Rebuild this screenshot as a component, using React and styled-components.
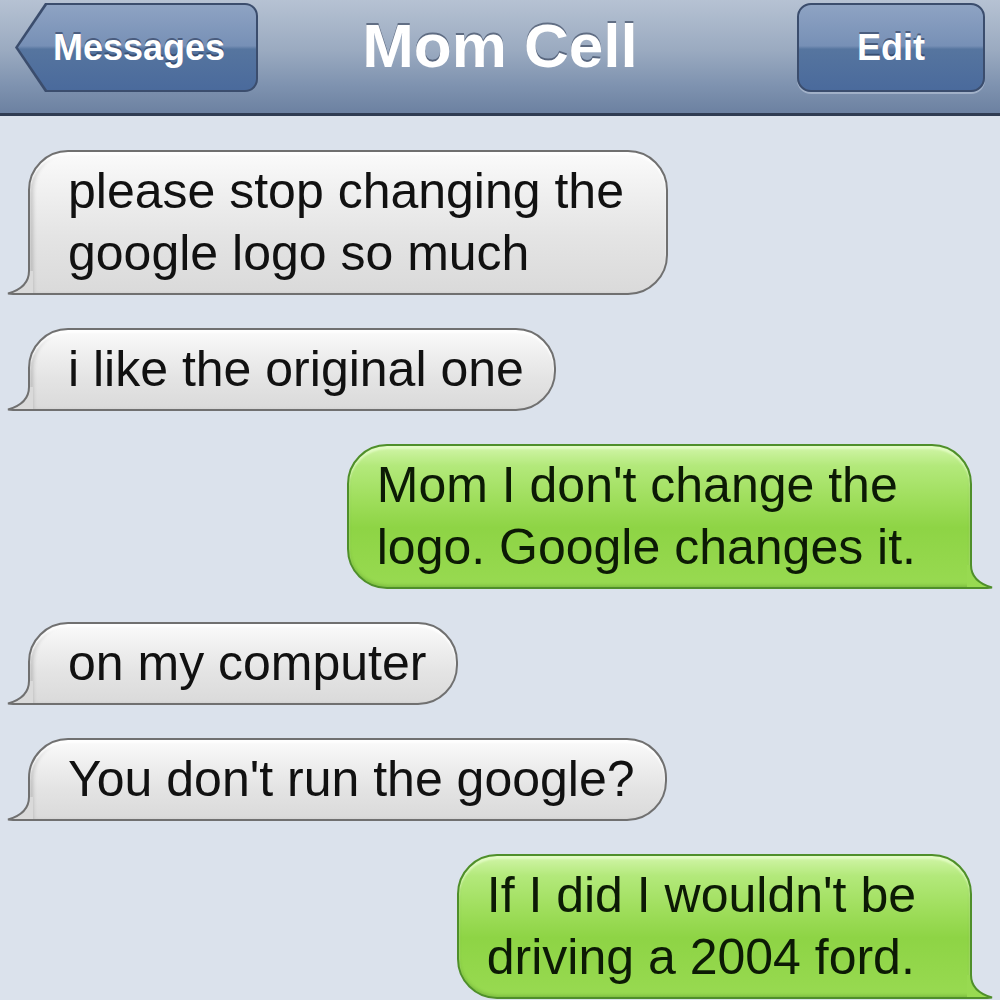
import styled, { createGlobalStyle } from "styled-components";

const GlobalStyle = createGlobalStyle`
  html, body {
    margin: 0;
    padding: 0;
    background: #dbe2ec;
  }
  * {
    box-sizing: border-box;
  }
`;

const messages = [
  { from: "them", lines: ["please stop changing the", "google logo so much"], min: 640 },
  { from: "them", lines: ["i like the original one"] },
  { from: "me", lines: ["Mom I don't change the", "logo. Google changes it."] },
  { from: "them", lines: ["on my computer"] },
  { from: "them", lines: ["You don't run the google?"] },
  { from: "me", lines: ["If I did I wouldn't be", "driving a 2004 ford."] },
];

function Tail({ me }) {
  const fill = me ? "#98da51" : "#dadada";
  const stroke = me ? "#4f8f2a" : "#707070";
  return (
    <TailSvg $me={me} width="30" height="24" viewBox="0 0 30 24">
      <path d="M23 0 C23 10 18 18 2 22.5 C8 23.5 16 23 27 23 L27 0 Z" fill={fill} />
      <path
        d="M23 0 C23 10 18 18 2 22.5 C8 23.5 16 23 30 23"
        fill="none"
        stroke={stroke}
        strokeWidth="2"
      />
    </TailSvg>
  );
}

export default function App() {
  return (
    <Screen>
      <GlobalStyle />
      <Header>
        <BackButton>
          <BackInner>Messages</BackInner>
        </BackButton>
        <Title>Mom Cell</Title>
        <EditButton>Edit</EditButton>
      </Header>
      <Thread>
        {messages.map((m, i) => (
          <Row key={i} $me={m.from === "me"}>
            <Bubble $me={m.from === "me"} $min={m.min}>
              {m.lines.map((l, j) => (
                <Line key={j}>{l}</Line>
              ))}
              <Tail me={m.from === "me"} />
            </Bubble>
          </Row>
        ))}
      </Thread>
    </Screen>
  );
}

const Screen = styled.div`
  width: 1000px;
  height: 1000px;
  overflow: hidden;
  display: flex;
  flex-direction: column;
  background: #dbe2ec;
  font-family: "Liberation Sans", Arial, Helvetica, sans-serif;
`;

const Header = styled.div`
  height: 116px;
  padding: 3px 15px 21px;
  display: grid;
  grid-template-columns: 1fr auto 1fr;
  align-items: center;
  background: linear-gradient(180deg, #b6c2d3 0%, #9aaac0 45%, #7f93b0 75%, #6c81a1 100%);
  border-bottom: 3px solid #2f3c52;
`;

const BackButton = styled.div`
  justify-self: start;
  width: 243px;
  height: 89px;
  padding: 2px 2px 2px 3px;
  background: #3b4d6d;
  border-radius: 0 13px 13px 0;
  clip-path: polygon(30px 0, 100% 0, 100% 100%, 30px 100%, 0 50%);
`;

const BackInner = styled.div`
  height: 100%;
  display: flex;
  align-items: center;
  padding-left: 35px;
  border-radius: 0 11px 11px 0;
  clip-path: polygon(29px 0, 100% 0, 100% 100%, 29px 100%, 0 50%);
  background: linear-gradient(180deg, #8ea3c3 0%, #7790b6 48%, #56759f 52%, #4a6a9c 100%);
  color: #fff;
  font-weight: bold;
  font-size: 36px;
  text-shadow: 0 -2px 0 rgba(30, 45, 75, 0.55);
`;

const Title = styled.div`
  color: #fff;
  font-weight: bold;
  font-size: 62px;
  line-height: 1;
  margin-top: -4px;
  text-shadow: 0 -2px 0 rgba(50, 62, 85, 0.6);
`;

const EditButton = styled.div`
  justify-self: end;
  width: 188px;
  height: 89px;
  display: flex;
  align-items: center;
  justify-content: center;
  border: 2px solid #3b4d6d;
  border-radius: 14px;
  background: linear-gradient(180deg, #8ea3c3 0%, #7790b6 48%, #56759f 52%, #4a6a9c 100%);
  box-shadow: 0 2px 0 rgba(210, 220, 235, 0.45);
  color: #fff;
  font-weight: bold;
  font-size: 36px;
  text-shadow: 0 -2px 0 rgba(30, 45, 75, 0.55);
`;

const Thread = styled.div`
  display: flex;
  flex-direction: column;
  gap: 33px;
  padding: 34px 28px 0;
`;

const Row = styled.div`
  display: flex;
  justify-content: ${(p) => (p.$me ? "flex-end" : "flex-start")};
`;

const Bubble = styled.div`
  position: relative;
  min-width: ${(p) => p.$min || 0}px;
  padding: ${(p) => (p.$me ? "8px 54px 9px 28px" : "8px 30px 9px 38px")};
  border: 2px solid ${(p) => (p.$me ? "#4f8f2a" : "#707070")};
  border-radius: ${(p) => (p.$me ? "40px 40px 0 40px" : "40px 40px 40px 0")};
  background: ${(p) =>
    p.$me
      ? "linear-gradient(180deg, #d2f5a9 0%, #b3e97b 14%, #9fde5c 38%, #8ed445 58%, #98da51 100%)"
      : "linear-gradient(180deg, #fbfbfb 0%, #efefef 30%, #e4e4e4 60%, #dadada 100%)"};
  box-shadow: ${(p) =>
    p.$me
      ? "inset 0 3px 2px rgba(235, 255, 210, 0.7), inset 0 -2px 3px rgba(60, 120, 20, 0.25)"
      : "inset 0 3px 2px rgba(255, 255, 255, 0.9), inset 5px 0 4px -2px rgba(0, 0, 0, 0.18)"};
  color: ${(p) => (p.$me ? "#0c1a05" : "#111")};
  font-size: 50px;
  line-height: 62px;
  white-space: nowrap;
`;

const Line = styled.div``;

const TailSvg = styled.svg`
  position: absolute;
  bottom: -2px;
  ${(p) => (p.$me ? "right: -24px; transform: scaleX(-1);" : "left: -24px;")}
  overflow: visible;
`;
